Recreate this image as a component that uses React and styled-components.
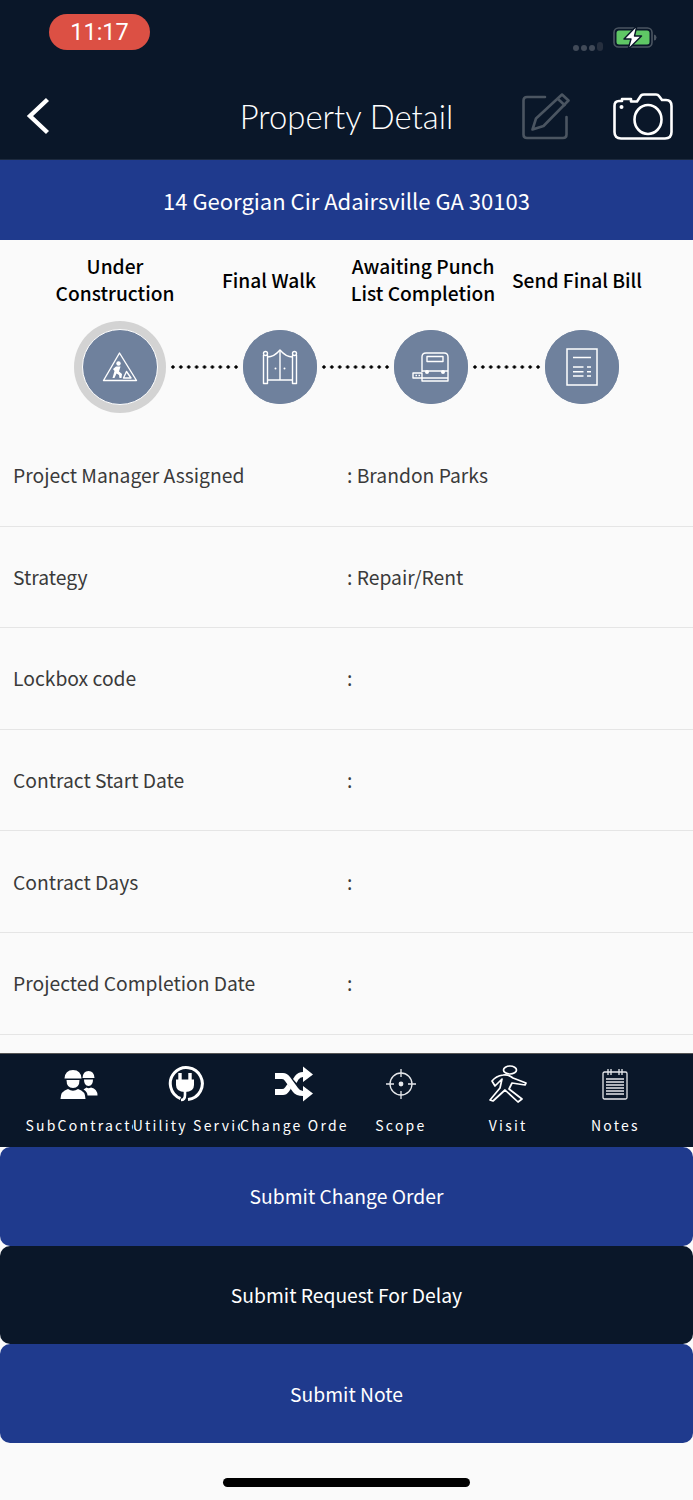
import React from 'react'
import styled, { createGlobalStyle } from 'styled-components'

const SANS = `"Noto Sans CJK JP", "Noto Sans", sans-serif`

const GlobalStyle = createGlobalStyle`
    html, body {
        margin: 0;
        padding: 0;
        background: #fafafa;
    }
    * {
        box-sizing: border-box;
    }
`

const steps = [
    { label: 'Under\nConstruction', icon: <ConstructionIcon />, active: true },
    { label: 'Final Walk', icon: <GateIcon /> },
    { label: 'Awaiting Punch\nList Completion', icon: <BusIcon /> },
    { label: 'Send Final Bill', icon: <BillIcon /> },
]

const details = [
    ['Project Manager Assigned', ': Brandon Parks'],
    ['Strategy', ': Repair/Rent'],
    ['Lockbox code', ':'],
    ['Contract Start Date', ':'],
    ['Contract Days', ':'],
    ['Projected Completion Date', ':'],
]

const tabs = [
    { label: 'SubContractors', icon: <WorkersIcon /> },
    { label: 'Utility Services', icon: <PlugIcon /> },
    { label: 'Change Order', icon: <ShuffleIcon /> },
    { label: 'Scope', icon: <TargetIcon /> },
    { label: 'Visit', icon: <WalkerIcon /> },
    { label: 'Notes', icon: <NotepadIcon /> },
]

function BackIcon() {
    return (
        <svg width="26" height="38" viewBox="0 0 26 38" fill="none" stroke="#fff" strokeWidth="4.4">
            <path d="M23.5 2.5 L6 19 L23.5 35.5" />
        </svg>
    )
}

function EditIcon() {
    return (
        <svg width="48" height="47" viewBox="0 0 48 47" fill="none" stroke="#4b5561" strokeWidth="2.6" strokeLinejoin="round" strokeLinecap="round">
            <path d="M23 4 H5 Q1.5 4 1.5 7.5 V41.5 Q1.5 45 5 45 H41 Q44.5 45 44.5 41.5 V24" />
            <path d="M40 1.5 L46.5 7.5 L21.5 33 L10.5 36.5 L14 25.5 Z" />
            <path d="M36 6 L42.5 12" />
        </svg>
    )
}

function CameraIcon() {
    return (
        <svg width="60" height="47" viewBox="0 0 60 47" fill="none" stroke="#fff" strokeWidth="2.6" strokeLinejoin="round">
            <path d="M6 8 H9 V6 H18 V8.5 H24 L28 2.5 Q29 1.5 31 1.5 H43 Q45 1.5 46 3 L49 7 H53 Q58.5 7 58.5 13 V39 Q58.5 45.5 52 45.5 H8 Q1.5 45.5 1.5 39 V13 Q1.5 8 6 8 Z" />
            <ellipse cx="35" cy="26.5" rx="13.5" ry="14.5" />
            <circle cx="8.5" cy="14" r="2" fill="#fff" stroke="none" />
        </svg>
    )
}

function ConstructionIcon() {
    return (
        <svg width="36" height="32" viewBox="0 0 36 32" fill="none" stroke="#fff" strokeWidth="1.4" strokeLinejoin="round">
            <path d="M17.5 2 L34.5 29.5 H1.5 Z" />
            <circle cx="16.5" cy="12.5" r="2.2" fill="#fff" stroke="none" />
            <path d="M11 18 L14 15.5 H18.5 L17 20.5 L20 23 L19.5 27 H17.5 L17 24 L14.5 22.5 L12.5 27 H10.5 L12.5 20 Z" fill="#fff" stroke="none" />
            <path d="M21.5 27 L24.5 20.5 L29 27 Z" />
        </svg>
    )
}

function GateIcon() {
    return (
        <svg width="36" height="36" viewBox="0 0 36 36" fill="none" stroke="#fff" strokeWidth="1.4" strokeLinejoin="round">
            <path d="M1.5 6 V34.5 H5.5 V6 M30.5 6 V34.5 H34.5 V6" />
            <circle cx="3.5" cy="4.5" r="2" />
            <circle cx="32.5" cy="4.5" r="2" />
            <path d="M5.5 8 Q12 8 18 1 Q24 8 30.5 8" />
            <path d="M18 1 V31 M5.5 31 H30.5" />
            <circle cx="13.5" cy="19.5" r="1" fill="#fff" stroke="none" />
            <circle cx="22.5" cy="19.5" r="1" fill="#fff" stroke="none" />
        </svg>
    )
}

function BusIcon() {
    return (
        <svg width="38" height="30" viewBox="0 0 38 30" fill="none" stroke="#fff" strokeWidth="1.4" strokeLinejoin="round">
            <path d="M10 20 V5 Q10 1 14 1 H32 Q36 1 36 5 V29 H10 V26" />
            <rect x="15" y="4.5" width="16" height="5" />
            <path d="M10 19 H36 M10 26 H36" />
            <circle cx="15" cy="20" r="2" fill="#fff" stroke="none" />
            <circle cx="31" cy="20" r="2" fill="#fff" stroke="none" />
            <rect x="1" y="21" width="9" height="5" />
            <path d="M3.5 23.5 H5 M6.5 23.5 H8" />
        </svg>
    )
}

function BillIcon() {
    return (
        <svg width="32" height="38" viewBox="0 0 32 38" fill="none" stroke="#fff" strokeWidth="1.5">
            <rect x="1" y="1" width="30" height="36" />
            <path d="M7 9.5 H25 M7 19 H17.5 M7 23.7 H17.5 M7 28 H17.5 M21 19 H25 M21 23.7 H25 M21 28 H25" />
        </svg>
    )
}

function WorkersIcon() {
    return (
        <svg width="38" height="32" viewBox="0 0 38 32" fill="#fff">
            <path d="M22.5 10 Q23 3 28.5 3 Q34 3 34.5 10 Z" />
            <path d="M24 11.5 H33 Q33 18 28.5 18 Q24 18 24 11.5 Z" />
            <path d="M26.5 19.5 Q28.5 21 31 19.5 Q37.5 21 37.5 27.5 H27.5 Q27.5 24 23.5 21.5 Z" />
            <path d="M4.5 10.5 Q5 2 13 2 Q21 2 21.5 10.5 Z" />
            <path d="M6.5 12 H19.5 Q19.5 20 13 20 Q6.5 20 6.5 12 Z" />
            <path d="M8 21 Q13 24.5 18 21 Q25.5 23 25.5 31 H0.5 Q0.5 23 8 21 Z" />
        </svg>
    )
}

function PlugIcon() {
    return (
        <svg width="38" height="38" viewBox="1 0 38 38" fill="none" stroke="#fff" strokeWidth="3">
            <path d="M14.5 33.5 A16 16 0 1 1 22 34.5" />
            <path d="M14 8 V15 M24 8 V15" strokeWidth="3.4" />
            <path d="M10 14.5 H28 V20 Q28 27 19 27 Q10 27 10 20 Z" fill="#fff" stroke="none" />
            <path d="M19 26 V30 Q19 35 15 35" strokeWidth="2.6" />
        </svg>
    )
}

function ShuffleIcon() {
    return (
        <svg width="38" height="36" viewBox="0 0 38 36" fill="#fff">
            <path d="M0 7 H8 Q12 7 15 11 L23 22 Q25 25 28 25 V20 L38 27.5 L28 35.5 V30 Q21 30 18 26 L10 15 Q9 13 7 13 H0 Z" />
            <path d="M0 23 H7 Q9 23 10 21.5 L12.5 18 L16 22.5 L14 25.5 Q11.5 29 8 29 H0 Z" />
            <path d="M18 13 L20 10 Q23 6 28 6 V0.5 L38 8.5 L28 16 V11 Q25 11 23.5 13.5 L21.5 17 Z" />
        </svg>
    )
}

function TargetIcon() {
    return (
        <svg width="30" height="30" viewBox="0 0 30 30" fill="none" stroke="#e6e8eb" strokeWidth="1.3">
            <circle cx="15" cy="15" r="11" />
            <path d="M15 0 V8 M15 22 V30 M0 15 H8 M22 15 H30" />
            <circle cx="15" cy="15" r="2.4" fill="#e6e8eb" stroke="none" />
        </svg>
    )
}

function WalkerIcon() {
    return (
        <svg width="38" height="38" viewBox="0 0 38 38" fill="none" stroke="#fff" strokeWidth="1.7" strokeLinejoin="round">
            <ellipse cx="21" cy="5" rx="6.5" ry="4" />
            <path d="M14 10 Q19 9 24 13 L37 18 L36 20 L23 18 L20 24 L33 34 L29 37 L16 25 L4 36 L1 35 L11 23 L13 14 L6 21 L3 16 Q7 11 14 10 Z" />
        </svg>
    )
}

function NotepadIcon() {
    return (
        <svg width="26" height="32" viewBox="0 0 26 32" fill="none" stroke="#e6e8eb" strokeWidth="1.3">
            <rect x="1" y="4" width="24" height="27" rx="1.5" />
            <path d="M6 1 V7 M9 1 V7 M17 1 V7 M20 1 V7" />
            <path d="M4 11 H22 M4 14 H22 M4 17 H22 M4 20 H22 M4 23 H22 M4 26 H22" strokeWidth="1.4" />
        </svg>
    )
}

function StatusBattery() {
    return (
        <svg width="44" height="26" viewBox="0 0 44 26" fill="none">
            <rect x="1" y="3" width="38" height="19" rx="4.5" stroke="#4b5561" strokeWidth="1.6" />
            <rect x="3.5" y="5.5" width="33" height="14" rx="2.5" fill="#5fc765" />
            <path d="M41 9.5 Q43.5 10 43.5 12.5 Q43.5 15 41 15.5 Z" fill="#4b5561" />
            <path d="M24 0.5 L11 14 H18 L15 24.5 L28.5 11 H21.5 Z" fill="#fff" stroke="#0a1729" strokeWidth="1.4" strokeLinejoin="round" />
        </svg>
    )
}

export default function App() {
    return (
        <Page>
            <GlobalStyle />
            <Header>
                <StatusBar>
                    <TimePill>11:17</TimePill>
                    <StatusRight>
                        <SignalDots>
                            <SignalDot />
                            <SignalDot />
                            <SignalDot />
                            <SignalDot $tall />
                        </SignalDots>
                        <StatusBattery />
                    </StatusRight>
                </StatusBar>
                <NavBar>
                    <BackSlot><BackIcon /></BackSlot>
                    <Title>Property Detail</Title>
                    <NavActions>
                        <EditIcon />
                        <CameraIcon />
                    </NavActions>
                </NavBar>
            </Header>

            <AddressBar>14 Georgian Cir Adairsville GA 30103</AddressBar>

            <StepLabels>
                {steps.map((step) => (
                    <StepLabel key={step.label}>{step.label}</StepLabel>
                ))}
            </StepLabels>

            <StepTrack>
                {steps.map((step, i) => (
                    <React.Fragment key={step.label}>
                        {i > 0 && <Dots />}
                        <StepCircle $active={step.active}>
                            <StepInner $active={step.active}>{step.icon}</StepInner>
                        </StepCircle>
                    </React.Fragment>
                ))}
            </StepTrack>

            <DetailList>
                {details.map(([name, value]) => (
                    <DetailRow key={name}>
                        <DetailName>{name}</DetailName>
                        <DetailValue>{value}</DetailValue>
                    </DetailRow>
                ))}
            </DetailList>

            <TabBar>
                {tabs.map((tab) => (
                    <Tab key={tab.label}>
                        <TabIcon>{tab.icon}</TabIcon>
                        <TabLabel>{tab.label}</TabLabel>
                    </Tab>
                ))}
            </TabBar>

            <ActionButton $color="#1f3a8d">Submit Change Order</ActionButton>
            <ActionButton $color="#0a1729">Submit Request For Delay</ActionButton>
            <ActionButton $color="#1f3a8d">Submit Note</ActionButton>

            <HomeArea>
                <HomeIndicator />
            </HomeArea>
        </Page>
    )
}

const Page = styled.div`
    width: 693px;
    height: 1500px;
    overflow: hidden;
    display: flex;
    flex-direction: column;
    background: #fafafa;
    font-family: ${SANS};
`

const Header = styled.div`
    height: 160px;
    flex-shrink: 0;
    display: flex;
    flex-direction: column;
    background: #0a1729;
    border-bottom: 1px solid #1d2a3e;
`

const StatusBar = styled.div`
    height: 73px;
    padding: 14px 36px 0 49px;
    display: flex;
    justify-content: space-between;
    align-items: flex-start;
`

const TimePill = styled.div`
    width: 101px;
    height: 36px;
    border-radius: 18px;
    background: #dc5044;
    color: #fff;
    font-family: Roboto, sans-serif;
    font-size: 23.5px;
    line-height: 36px;
    text-align: center;
`

const StatusRight = styled.div`
    display: flex;
    align-items: flex-end;
    gap: 10px;
    padding-top: 11px;
`

const SignalDots = styled.div`
    display: flex;
    align-items: flex-end;
    gap: 2px;
`

const SignalDot = styled.div`
    width: 6px;
    height: ${(p) => (p.$tall ? 9 : 6)}px;
    border-radius: 3px;
    background: ${(p) => (p.$tall ? '#262f3e' : '#414a58')};
`

const NavBar = styled.div`
    flex: 1;
    display: grid;
    grid-template-columns: 1fr auto 1fr;
    align-items: center;
    padding: 0 20px 0 24px;
`

const BackSlot = styled.div`
    display: flex;
    align-items: center;
`

const Title = styled.div`
    font-family: Lato, sans-serif;
    font-weight: 300;
    font-size: 32.8px;
    color: #fff;
    margin-left: -4px;
`

const NavActions = styled.div`
    display: flex;
    justify-content: flex-end;
    align-items: center;
    gap: 43px;
`

const AddressBar = styled.div`
    height: 80px;
    flex-shrink: 0;
    display: flex;
    align-items: center;
    justify-content: center;
    background: #1f3a8d;
    color: #fff;
    font-size: 22px;
`

const StepLabels = styled.div`
    height: 81px;
    flex-shrink: 0;
    padding: 0 0 1px 38px;
    display: flex;
    align-items: center;
`

const StepLabel = styled.div`
    width: 154px;
    flex-shrink: 0;
    white-space: pre;
    text-align: center;
    color: #000;
    font-size: 19.2px;
    font-weight: 500;
    line-height: 27px;
`

const StepTrack = styled.div`
    height: 104px;
    flex-shrink: 0;
    padding: 0 0 12px 74px;
    display: flex;
    align-items: center;
`

const Dots = styled.div`
    width: 71px;
    height: 4px;
    margin: 0 3px;
    background-image: radial-gradient(circle, #000 1.4px, transparent 1.9px);
    background-size: 7.9px 4px;
`

const StepCircle = styled.div`
    width: ${(p) => (p.$active ? 92 : 74)}px;
    height: ${(p) => (p.$active ? 92 : 74)}px;
    flex-shrink: 0;
    border-radius: 50%;
    display: flex;
    align-items: center;
    justify-content: center;
    background: ${(p) => (p.$active ? '#d3d3d3' : '#6f819d')};
`

const StepInner = styled.div`
    width: ${(p) => (p.$active ? '76px' : '100%')};
    height: ${(p) => (p.$active ? '76px' : '100%')};
    border-radius: 50%;
    display: flex;
    align-items: center;
    justify-content: center;
    background: #6f819d;
    border: ${(p) => (p.$active ? '1px solid #fff' : 'none')};
`

const DetailList = styled.div`
    flex: 1;
    min-height: 0;
    overflow: hidden;
`

const DetailRow = styled.div`
    height: 101.6px;
    padding-left: 13px;
    display: flex;
    align-items: center;
    border-bottom: 1px solid #e5e5e5;
`

const DetailName = styled.div`
    width: 334px;
    font-size: 19.3px;
    color: #3a3a3a;
`

const DetailValue = styled.div`
    font-size: 19.3px;
    color: #3a3a3a;
`

const TabBar = styled.div`
    height: 94px;
    flex-shrink: 0;
    padding: 10px 24px 0 25.5px;
    display: grid;
    grid-template-columns: repeat(6, 1fr);
    background: #0a1729;
    border-top: 1px solid #555;
`

const Tab = styled.div`
    min-width: 0;
    display: flex;
    flex-direction: column;
    align-items: center;
`

const TabIcon = styled.div`
    height: 40px;
    display: flex;
    align-items: center;
    justify-content: center;
`

const TabLabel = styled.div`
    width: 100%;
    margin-top: 11px;
    overflow: hidden;
    white-space: nowrap;
    text-align: center;
    color: #fff;
    font-size: 14px;
    letter-spacing: 2.2px;
    line-height: 20px;
`

const ActionButton = styled.div`
    height: 98.7px;
    flex-shrink: 0;
    display: flex;
    align-items: center;
    justify-content: center;
    border-radius: 10px;
    background: ${(p) => p.$color};
    color: #fff;
    font-size: 19.3px;
`

const HomeArea = styled.div`
    height: 57px;
    flex-shrink: 0;
    padding-top: 35px;
    display: flex;
    justify-content: center;
`

const HomeIndicator = styled.div`
    width: 247px;
    height: 9px;
    border-radius: 5px;
    background: #000;
`
